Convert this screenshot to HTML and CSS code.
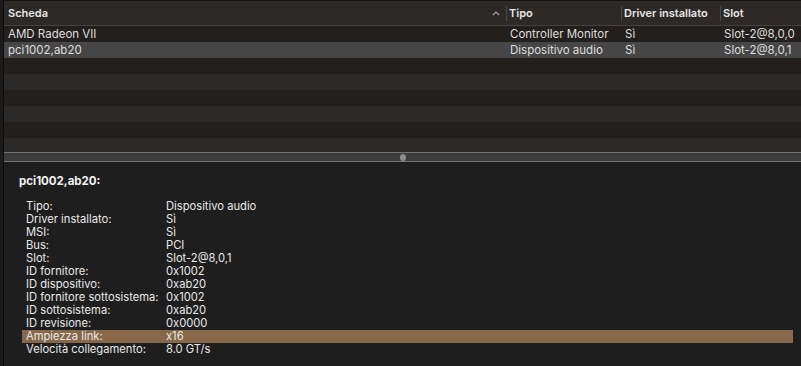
FILE: index.html
```html
<!DOCTYPE html>
<html lang="it">
<head>
    <meta charset="UTF-8">
    <title>Schede PCI</title>
    <link rel="stylesheet" href="styles.css">
</head>
<body>
    <div class="window">
        <div class="edge"></div>
        <div class="main">
            <div class="table-pane">
                <div class="row head">
                    <div class="cell col-name">Scheda
                        <svg class="sort" width="8" height="5" viewBox="0 0 8 5"><path d="M0.8 4.2 L4 1 L7.2 4.2" fill="none" stroke="#a9a6a3" stroke-width="1.2"/></svg>
                    </div>
                    <div class="cell col-type">Tipo</div>
                    <div class="cell col-driver">Driver installato</div>
                    <div class="cell col-slot">Slot</div>
                </div>
                <div class="row odd">
                    <div class="cell col-name">AMD Radeon VII</div>
                    <div class="cell col-type">Controller Monitor</div>
                    <div class="cell col-driver">Sì</div>
                    <div class="cell col-slot">Slot-2@8,0,0</div>
                </div>
                <div class="row selected">
                    <div class="cell col-name">pci1002,ab20</div>
                    <div class="cell col-type">Dispositivo audio</div>
                    <div class="cell col-driver">Sì</div>
                    <div class="cell col-slot">Slot-2@8,0,1</div>
                </div>
                <div class="row odd"></div>
                <div class="row even"></div>
                <div class="row odd"></div>
                <div class="row even"></div>
                <div class="row odd"></div>
                <div class="row even"></div>
            </div>

            <div class="divider"><span class="grip"></span></div>

            <div class="detail">
                <h2 class="detail-title">pci1002,ab20:</h2>
                <div class="props">
                    <div class="prop"><span class="key">Tipo:</span><span class="val">Dispositivo audio</span></div>
                    <div class="prop"><span class="key">Driver installato:</span><span class="val">Sì</span></div>
                    <div class="prop"><span class="key">MSI:</span><span class="val">Sì</span></div>
                    <div class="prop"><span class="key">Bus:</span><span class="val">PCI</span></div>
                    <div class="prop"><span class="key">Slot:</span><span class="val">Slot-2@8,0,1</span></div>
                    <div class="prop"><span class="key">ID fornitore:</span><span class="val">0x1002</span></div>
                    <div class="prop"><span class="key">ID dispositivo:</span><span class="val">0xab20</span></div>
                    <div class="prop"><span class="key">ID fornitore sottosistema:</span><span class="val">0x1002</span></div>
                    <div class="prop"><span class="key">ID sottosistema:</span><span class="val">0xab20</span></div>
                    <div class="prop"><span class="key">ID revisione:</span><span class="val">0x0000</span></div>
                    <div class="prop hilite"><span class="key">Ampiezza link:</span><span class="val">x16</span></div>
                    <div class="prop"><span class="key">Velocità collegamento:</span><span class="val">8.0 GT/s</span></div>
                </div>
            </div>
        </div>
    </div>
</body>
</html>
```

FILE: styles.css
```css
/* System Information style, dark */
body {
    margin: 0;
    background-color: #1e1e1e;
    font-family: 'Inter', 'Liberation Sans', sans-serif;
    color: #dedede;
}

.window {
    display: flex;
    height: 366px;
    overflow: hidden;
}

.edge {
    width: 3px;
    background-color: #1b1b1b;
    border-right: 1px solid #0d0d0d;
}

.main {
    flex: 1;
    display: flex;
    flex-direction: column;
}

/* Table */
.table-pane {
    height: 151px;
    overflow: hidden;
    border-top: 1px solid #151413;
}

.row {
    display: flex;
    height: 16px;
    font-size: 11.5px;
    line-height: 16px;
}

.row.odd {
    background-color: #221f1d;
}

.row.even {
    background-color: #2c2a29;
}

.row.selected {
    background-color: #464646;
}

.row.head {
    height: 24px;
    line-height: 24px;
    background-color: #2c2927;
    border-bottom: 1px solid #45423f;
    font-weight: 600;
    font-size: 11px;
    color: #e6e6e6;
}

.cell {
    padding-left: 3px;
    white-space: nowrap;
    overflow: hidden;
}

.head .cell {
    position: relative;
}

.head .cell + .cell::before {
    content: "";
    position: absolute;
    left: 0;
    top: 5px;
    bottom: 4px;
    border-left: 1px solid #4b4845;
}

.col-name {
    width: 499px;
    padding-left: 4px;
}

.head .col-name {
    display: flex;
    justify-content: space-between;
    align-items: center;
    padding-right: 6px;
    width: 492px;
}

.col-type {
    width: 112px;
}

.col-driver {
    width: 96px;
}

.col-slot {
    flex: 1;
}

/* Split view divider */
.divider {
    height: 8px;
    background-color: #3c3c3c;
    border-top: 1px solid #737373;
    border-bottom: 1px solid #737373;
    display: flex;
    justify-content: center;
    align-items: center;
}

.grip {
    width: 6px;
    height: 7px;
    border-radius: 50%;
    background-color: #8c8c8c;
}

/* Detail pane */
.detail {
    padding: 12px 8px 0 15px;
    font-size: 11.2px;
    color: #e8e8e8;
}

.detail-title {
    margin: 0 0 12px;
    font-size: 11.5px;
    font-weight: 700;
    line-height: 14px;
    color: #f2f2f2;
}

.props {
    padding-left: 3px;
}

.prop {
    display: flex;
    height: 13px;
    line-height: 13px;
    padding-left: 4px;
}

.prop.hilite {
    background-color: #87684b;
}

.key {
    width: 140px;
}
```
